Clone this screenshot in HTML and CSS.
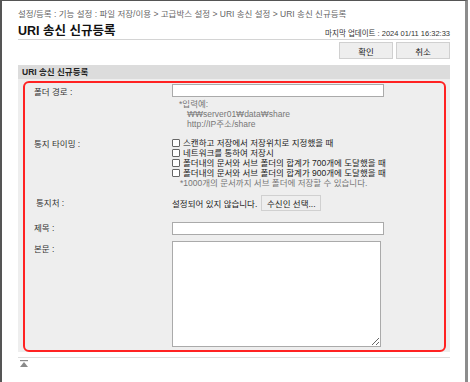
FILE: index.html
```html
<!DOCTYPE html>
<html lang="ko">
  <head>
    <meta charset="UTF-8" />
    <title>URI 송신 신규등록</title>
    <link rel="stylesheet" href="styles.css">
  </head>
  <body>
    <div class="window">
      <div class="page">
        <div class="breadcrumb">
          설정/등록 : 기능 설정 : 파일 저장/이용 &gt; 고급박스 설정 &gt; URI 송신 설정 &gt; URI 송신 신규등록
        </div>
        <div class="title-row">
          <h1>URI 송신 신규등록</h1>
          <span class="updated">마지막 업데이트 : 2024 01/11 16:32:33</span>
        </div>
        <div class="actions">
          <button class="btn">확인</button>
          <button class="btn">취소</button>
        </div>

        <!-- Form section -->
        <section class="section">
          <h2>URI 송신 신규등록</h2>
          <div class="section-body">
            <div class="highlight">
              <div class="row row-folder">
                <label class="label" for="folderPath">폴더 경로 :</label>
                <div class="field">
                  <input type="text" id="folderPath" class="text-input" />
                  <div class="hint">
                    <div>*입력예:</div>
                    <div class="hint-sample">₩₩server01₩data₩share</div>
                    <div class="hint-sample">http://IP주소/share</div>
                  </div>
                </div>
              </div>
              <div class="row row-timing">
                <span class="label">통지 타이밍 :</span>
                <div class="field">
                  <label class="check"><input type="checkbox" />스캔하고 저장에서 저장위치로 지정했을 때</label>
                  <label class="check"><input type="checkbox" />네트워크를 통하여 저장시</label>
                  <label class="check"><input type="checkbox" />폴더내의 문서와 서브 폴더의 합계가 700개에 도달했을 때</label>
                  <label class="check"><input type="checkbox" />폴더내의 문서와 서브 폴더의 합계가 900개에 도달했을 때</label>
                  <div class="note">*1000개의 문서까지 서브 폴더에 저장할 수 있습니다.</div>
                </div>
              </div>
              <div class="row row-notify">
                <span class="label label-notify">통지처 :</span>
                <div class="field field-notify">
                  <span>설정되어 있지 않습니다.</span>
                  <button class="btn btn-small">수신인 선택...</button>
                </div>
              </div>
              <div class="row row-subject">
                <label class="label" for="subject">제목 :</label>
                <div class="field">
                  <input type="text" id="subject" class="text-input" />
                </div>
              </div>
              <div class="row row-body">
                <label class="label" for="message">본문 :</label>
                <div class="field">
                  <textarea id="message" class="text-area"></textarea>
                </div>
              </div>
            </div>
          </div>
        </section>

        <div class="footer">
          <svg class="top-icon" width="8" height="7" viewBox="0 0 8 7">
            <rect x="0" y="0" width="8" height="1.2" fill="#8a8a8a" />
            <polygon points="4,2 8,7 0,7" fill="#8a8a8a" />
          </svg>
        </div>
      </div>
    </div>
  </body>
</html>
```

FILE: styles.css
```css
* {
  margin: 0;
  padding: 0;
  box-sizing: border-box;
}

body {
  font-family: "Liberation Sans", "Noto Sans CJK KR", sans-serif;
  font-size: 8.5px;
  color: #222;
  background: #fff;
}

.window {
  width: 468px;
  height: 382px;
  border-top: 1px solid #555;
  border-left: 2px solid #555;
  border-right: 3px solid #8c8c8c;
  overflow: hidden;
}

.page {
  padding: 0 15px 0 16px;
}

.breadcrumb {
  padding-top: 8px;
  line-height: 11px;
  color: #666;
  white-space: nowrap;
}

.title-row {
  display: flex;
  justify-content: space-between;
  align-items: flex-end;
  height: 20px;
  border-bottom: 1px solid #d4d4d4;
}

h1 {
  font-size: 12.5px;
  font-weight: 700;
  line-height: 16px;
  color: #111;
}

.updated {
  font-size: 7.5px;
  line-height: 11px;
  color: #333;
}

.actions {
  display: flex;
  justify-content: flex-end;
  gap: 3px;
  margin-top: 2px;
}

.btn {
  font-family: inherit;
  font-size: 8.5px;
  color: #222;
  background: #eee;
  border: 1px solid #d0d0d0;
  height: 17px;
  width: 54px;
  cursor: pointer;
}

.btn-small {
  width: 60px;
  height: 16px;
  margin-left: 4px;
}

.section {
  margin-top: 6px;
}

h2 {
  font-size: 8.5px;
  font-weight: 700;
  line-height: 14px;
  height: 14px;
  padding-left: 4px;
  background: #dcdcdc;
  color: #222;
}

.section-body {
  background: #eee;
  padding: 2px 4px 0 5px;
}

.highlight {
  border: 2px solid #f22;
  border-radius: 6px;
  padding: 1px 0 4px;
  height: 271px;
}

.row {
  display: flex;
}

.label {
  width: 147px;
  padding-left: 9px;
  line-height: 13px;
  padding-top: 2px;
  color: #333;
}

.field {
  flex: 1;
}

.text-input {
  display: block;
  width: 212px;
  height: 13px;
  border: 1px solid #aaa;
  background: #fff;
}

.hint {
  margin-top: 2px;
  padding-left: 7px;
  line-height: 10px;
  color: #777;
}

.hint-sample {
  padding-left: 8px;
}

.row-timing {
  margin-top: 9px;
}

.row-timing .label {
  padding-top: 0;
}

.check {
  display: flex;
  align-items: center;
  line-height: 10px;
  height: 10px;
}

.check input {
  appearance: none;
  width: 8px;
  height: 8px;
  border: 1px solid #666;
  border-radius: 1px;
  background: #fff;
  margin-right: 3px;
}

.note {
  padding-left: 8px;
  line-height: 10px;
  color: #777;
}

.row-notify {
  margin-top: 7px;
}

.label-notify {
  padding-left: 11px;
}

.field-notify {
  display: flex;
  align-items: center;
}

.row-subject {
  margin-top: 11px;
}

.row-subject .label {
  padding-top: 0;
}

.row-body {
  margin-top: 6px;
}

.text-area {
  display: block;
  width: 209px;
  height: 106px;
  border: 1px solid #aaa;
  background: #fff;
  resize: both;
}

.footer {
  margin-top: 5px;
  border-top: 1px solid #ddd;
  padding: 2px 0 0 2px;
}

.top-icon {
  display: block;
}
```
